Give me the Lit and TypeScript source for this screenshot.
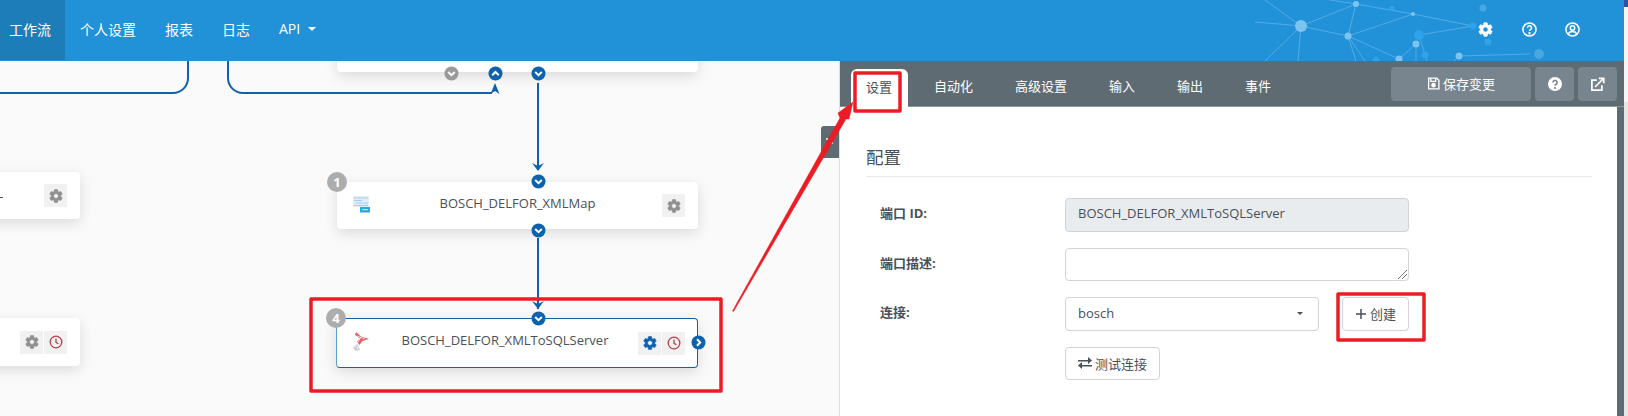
import { LitElement, html, css, svg } from "lit";
import { customElement } from "lit/decorators.js";

const gearPath = "M19.14 12.94c.04-.3.06-.61.06-.94 0-.32-.02-.64-.07-.94l2.03-1.58c.18-.14.23-.41.12-.61l-1.92-3.32c-.12-.22-.37-.29-.59-.22l-2.39.96c-.5-.38-1.03-.7-1.62-.94l-.36-2.54c-.04-.24-.24-.41-.48-.41h-3.84c-.24 0-.43.17-.47.41l-.36 2.54c-.59.24-1.13.57-1.62.94l-2.39-.96c-.22-.08-.47 0-.59.22L2.74 8.87c-.12.21-.08.47.12.61l2.03 1.58c-.05.3-.09.63-.09.94s.02.64.07.94l-2.03 1.58c-.18.14-.23.41-.12.61l1.92 3.32c.12.22.37.29.59.22l2.39-.96c.5.38 1.03.7 1.62.94l.36 2.54c.05.24.24.41.48.41h3.84c.24 0 .44-.17.47-.41l.36-2.54c.59-.24 1.13-.56 1.62-.94l2.39.96c.22.08.47 0 .59-.22l1.92-3.32c.12-.22.07-.47-.12-.61l-2.01-1.58zM12 15.6c-1.98 0-3.6-1.62-3.6-3.6s1.62-3.6 3.6-3.6 3.6 1.62 3.6 3.6-1.62 3.6-3.6 3.6z";

function gear(color: string, size = 16) {
  return html`<svg width=${size} height=${size} viewBox="0 0 24 24"><path fill=${color} stroke=${color} stroke-width="1" fill-rule="evenodd" d=${gearPath}></path></svg>`;
}
function clock() {
  return html`<svg width="14" height="14" viewBox="0 0 24 24" fill="none" stroke="#b5404a" stroke-width="2.2"><circle cx="12" cy="12" r="10"></circle><path d="M12 6v6.5l4 2.5"></path></svg>`;
}
function chevDot(dir: "up" | "down" | "right", color = "#0d62ad") {
  const d = dir === "up" ? "M4.2 9.2 7.500 6l3.300 3.200" : dir === "down" ? "M4.200 6 7.500 9.200 10.800 6" : "M6 4.200 9.200 7.500 6 10.800";
  return html`<svg width="15" height="15" viewBox="0 0 15 15"><circle cx="7.500" cy="7.500" r="7" fill=${color}></circle><path d=${d} fill="none" stroke="#fff" stroke-width="2"></path></svg>`;
}

@customElement("flow-node")
class FlowNode extends LitElement {
  static properties = {
    label: {},
    badge: {},
    selected: { type: Boolean },
    clock: { type: Boolean },
    x: { type: Number },
    y: { type: Number },
    w: { type: Number },
    h: { type: Number },
    kind: {},
  };
  label = "";
  badge = "";
  selected = false;
  clock = false;
  x = 0;
  y = 0;
  w = 361;
  h = 47;
  kind = "";
  static styles = css`
    :host { display: block; position: absolute; }
    .node {
      box-sizing: border-box; width: 100%; height: 100%; background: #fff; border-radius: 4px;
      box-shadow: 0 4px 14px rgba(0, 0, 0, 0.13); display: flex; align-items: center;
      padding: 0 12px 0 15px; border: 1px solid transparent;
    }
    .node.selected { border-color: #0d62ad; border-left-color: #5f9fd6; }
    .icon { width: 24px; height: 24px; flex: none; display: flex; align-items: center; margin-top: -3px; }
    .label { flex: 1; text-align: center; font-size: 13px; color: #495057; white-space: nowrap; margin-top: -6px; padding-right: 4px; }
    .btns { display: flex; gap: 1px; }
    .btn { width: 23px; height: 23px; background: #f1f1f1; display: flex; align-items: center; justify-content: center; }
    .badge {
      position: absolute; left: -10px; top: -10px; width: 20px; height: 20px; border-radius: 50%;
      background: #adadad; color: #fff; font-weight: 700; font-size: 13px; line-height: 20px; text-align: center;
    }
  `;
  render() {
    const gearColor = this.selected ? "#0d62ad" : "#8f8f8f";
    this.style.cssText = `left:${this.x}px;top:${this.y}px;width:${this.w}px;height:${this.h}px`;
    return html`<div class="node ${this.selected ? "selected" : ""}">
        <div class="icon">
          ${this.kind === "xml"
            ? html`<svg width="18" height="17" viewBox="0 0 18 17"><rect x="0" y="0" width="16" height="11" fill="#e3edf4"></rect><path d="M1 2h14M1 4.500h8M3 7h12M1 9.500h14" stroke="#a9cde6" stroke-width="1.200"></path><rect x="7" y="11" width="10" height="5.500" fill="#2ea8e0"></rect><path d="M9 13.700h6" stroke="#cfeaf8" stroke-width="1"></path></svg>`
            : this.kind === "sql"
            ? html`<svg width="18" height="19" viewBox="0 0 18 19"><path d="M4 0 9 4.500 17 7 10.500 9 7.500 13 5 9.500 8 6.500 3 3z" fill="#e2474f" fill-opacity=".85"></path><path d="M5 4l8 3M9 5 6 10" stroke="#fff" stroke-width=".7"></path><path d="M1 16 5.500 11.500 8 18 4 19z" fill="#cbcbcb"></path><path d="M3 15l4 1M5 12.500l1 5" stroke="#fff" stroke-width=".5"></path></svg>`
            : ""}
        </div>
        <div class="label">${this.label}</div>
        <div class="btns">
          <div class="btn">${gear(gearColor)}</div>
          ${this.clock ? html`<div class="btn">${clock()}</div>` : ""}
        </div>
      </div>
      ${this.badge ? html`<div class="badge">${this.badge}</div>` : ""}`;
  }
}

@customElement("app-root")
export class AppRoot extends LitElement {
  static styles = css`
    :host {
      display: flex; width: 1628px; height: 416px; overflow: hidden; position: relative;
      font-family: "Open Sans", "Noto Sans CJK SC", sans-serif; background: #fafafa;
    }
    .shell { width: 1624px; flex: none; display: flex; flex-direction: column; }
    .strip { width: 4px; flex: none; display: flex; flex-direction: column; background: #e6e6e6; }
    .strip .a { height: 7px; background: #2b50a8; }
    .strip .b { height: 95px; background: #f5f5f5; }
    header {
      height: 61px; flex: none; background: #2292d8; display: flex; align-items: stretch; position: relative; color: #fff; font-size: 14px;
    }
    .nav { height: 60px; padding: 0 14.5px 3px; box-sizing: border-box; display: flex; align-items: center; position: relative; }
    .nav.active { background: #1d7db8; padding: 0 14px 3px 9px; width: 65px; }
    .nav.second { padding-left: 15px; }
    .caret { width: 0; height: 0; border: 4px solid transparent; border-top-color: #fff; border-bottom: 0; margin-left: 8px; }
    .net { position: absolute; left: 1230px; top: 0; }
    .hicons { position: absolute; right: 44px; top: 0; height: 58px; display: flex; align-items: center; gap: 28px; }
    .hicons svg { display: block; }

    main { display: flex; height: 355px; }
    .canvas { width: 839px; flex: none; position: relative; overflow: hidden; background: #fafafa; border-right: 1px solid #dedede; }
    .wires { position: absolute; left: 0; top: 0; }
    .dot { position: absolute; width: 15px; height: 15px; }
    .dot svg { display: block; }
    .dash { position: absolute; left: 0; top: 136px; width: 3px; height: 1px; background: #495057; }
    .handle { position: absolute; left: 821px; top: 65px; width: 18px; height: 32px; background: #5f6b73; border-radius: 3px 0 0 3px; }
    .handle svg { display: block; }

    .panel { width: 784px; flex: none; display: flex; flex-direction: column; background: #5f6b73; }
    .tabbar { height: 46px; background: #5f6b73; display: flex; align-items: flex-end; flex: none; padding-left: 11px; position: relative; border-bottom: 1px solid #8b959c; box-sizing: border-box; }
    .tabs { display: flex; gap: 10px; height: 37px; font-size: 13px; color: #fff; }
    .tab { padding: 0 16px; display: flex; align-items: center; padding-bottom: 4px; box-sizing: border-box; }
    .tab.active { background: #fff; color: #495057; border-radius: 6px 6px 0 0; padding-left: 15px; margin-bottom: -1px; height: 38px; }
    .actions { position: absolute; right: 7px; top: 6px; display: flex; gap: 4px; }
    .act { height: 34px; width: 39px; background: #79858e; border-radius: 4px; display: flex; align-items: center; justify-content: center; color: #fff; font-size: 13px; gap: 3px; }
    .act.save { width: 140px; padding-bottom: 2px; box-sizing: border-box; }

    .content { width: 777px; flex: 1; background: #fff; box-sizing: border-box; padding: 0 25px 0 26px; }
    h2 { margin: 0; padding-top: 38px; height: 70px; box-sizing: border-box; font-size: 17.5px; font-weight: 400; color: #495057; line-height: 24px; border-bottom: 1px solid #e9e9e9; }
    .row { display: flex; align-items: flex-start; color: #495057; font-size: 13px; margin-top: 16px; }
    .row:first-of-type { margin-top: 21px; }
    .lbl { width: 199px; padding-left: 14px; box-sizing: border-box; font-weight: 700; line-height: 31px; }
    .input { width: 344px; height: 34px; box-sizing: border-box; border: 1px solid #ced4da; border-radius: 4px; padding: 0 12px; line-height: 29px; background: #fff; }
    .input.dis { background: #e9ecef; }
    .input.area { height: 33px; position: relative; }
    .grip { position: absolute; right: 1px; bottom: 1px; }
    .select { width: 254px; display: flex; align-items: center; justify-content: space-between; padding-right: 15px; padding-bottom: 2px; }
    .sel-caret { width: 0; height: 0; border: 3.5px solid transparent; border-top-color: #495057; border-bottom: 0; }
    .btn { height: 34px; box-sizing: border-box; border: 1px solid #ced4da; border-radius: 4px; background: #fff; display: flex; align-items: center; justify-content: center; gap: 3px; padding-bottom: 1px; }
    .create { width: 67px; margin-left: 23px; }
    .test { width: 95px; height: 33px; }
    .annot { position: absolute; left: 0; top: 0; pointer-events: none; }
  `;
  render() {
    const dots: [number, number, "up" | "down" | "right", string?][] = [
      [451, 12, "down", "#9a9a9a"],
      [495, 12, "up"],
      [538, 12, "down"],
      [538, 120, "down"],
      [538, 169, "down"],
      [538, 257, "down"],
      [698, 281, "right"],
    ];
    const lightNodes: [number, number, number][] = [
      [71, 26, 6], [126, 4, 3], [183, 14, 2], [118, 36, 3.5], [186, 44, 3.5], [169, 59, 3.5], [229, 56, 3.5],
    ];
    const darkNodes: [number, number, number][] = [
      [162, 8, 2.5], [189, 35, 5], [243, 26, 3.5], [195, 55, 3.5], [146, 60, 3.5], [258, 42, 3.5],
    ];
    const fadedNodes: [number, number, number][] = [
      [253, 8, 3.5], [309, 54, 5],
    ];
    const links: [number, number, number, number][] = [
      [71, 26, 126, 4], [71, 26, 118, 36], [126, 4, 183, 14], [126, 4, 118, 36], [118, 36, 183, 14], [118, 36, 169, 59], [118, 36, 135, 61], [118, 36, 126, 61],
      [71, 26, 35, 61], [71, 26, 68, 61], [71, 26, 25, 22], [71, 26, 35, 0], [183, 14, 243, 26], [189, 35, 243, 26], [186, 44, 186, 61], [186, 44, 169, 59],
      [189, 35, 197, 61], [229, 56, 300, 54], [229, 56, 224, 61], [126, 4, 100, 0],
    ];
    return html`
      <div class="shell">
        <header>
          <div class="nav active">工作流</div>
          <div class="nav second">个人设置</div>
          <div class="nav">报表</div>
          <div class="nav">日志</div>
          <div class="nav">API<span class="caret"></span></div>
          <svg class="net" width="394" height="61" viewBox="0 0 394 61">
            ${links.map(([a, b, c, d]) => svg`<line x1=${a} y1=${b} x2=${c} y2=${d} stroke="#7cc0ec" stroke-opacity=".55" stroke-width="1"></line>`)}
            ${lightNodes.map(([x, y, r]) => svg`<circle cx=${x} cy=${y} r=${r} fill="#7cc4f0"></circle>`)}
            ${darkNodes.map(([x, y, r]) => svg`<circle cx=${x} cy=${y} r=${r} fill="#2ea2ea"></circle>`)}
            ${fadedNodes.map(([x, y, r]) => svg`<circle cx=${x} cy=${y} r=${r} fill="#4aa6df"></circle>`)}
          </svg>
          <div class="hicons">
            <span>${gear("#fff", 17)}</span>
            <svg width="15" height="15" viewBox="0 0 24 24" fill="none" stroke="#fff" stroke-width="2.400"><circle cx="12" cy="12" r="10.500"></circle><path d="M8.800 9.200a3.200 3.200 0 1 1 4.600 3c-1 .6-1.400 1.100-1.400 2.300"></path><circle cx="12" cy="18" r=".8" fill="#fff"></circle></svg>
            <svg width="15" height="15" viewBox="0 0 24 24" fill="none" stroke="#fff" stroke-width="2.400"><circle cx="12" cy="12" r="10.500"></circle><circle cx="12" cy="9.500" r="3.500"></circle><path d="M5.500 19c1-3 3.500-4 6.500-4s5.500 1 6.500 4"></path></svg>
          </div>
        </header>
        <main>
          <div class="canvas">
            <svg class="wires" width="839" height="355" viewBox="0 61 839 355" fill="none" stroke="#0d62ad" stroke-width="2">
              <path d="M188 61v17a15 15 0 0 1-15 15H0"></path>
              <path d="M228 61v17a15 15 0 0 0 15 15h249"></path>
              <path d="M538 83v87M538 238v71"></path>
              <path d="M495 82l-4.500 11 4.500-3 4.500 3z" fill="#0d62ad" stroke="none" transform="translate(0 1)"></path>
              <path d="M532 163l6 8 6-8-6 3zM532 301l6 8 6-8-6 3z" fill="#0d62ad" stroke="none"></path>
            </svg>
            <flow-node .x=${-281} .y=${-61}></flow-node>
            <flow-node .x=${337} .y=${-61} .h=${72}></flow-node>
            <flow-node .x=${-281} .y=${111} .h=${47}></flow-node>
            <flow-node .x=${-281} .y=${257} .h=${48} .clock=${true}></flow-node>
            <flow-node .x=${337} .y=${121} .label=${"BOSCH_DELFOR_XMLMap"} .badge=${"1"} .kind=${"xml"}></flow-node>
            <flow-node .x=${336} .y=${257} .w=${362} .h=${50} .selected=${true} .clock=${true} .label=${"BOSCH_DELFOR_XMLToSQLServer"} .badge=${"4"} .kind=${"sql"}></flow-node>
            <div class="dash"></div>
            ${dots.map(([x, y, d, c]) => html`<div class="dot" style="left:${x - 7.5}px;top:${y - 7.5}px">${chevDot(d, c)}</div>`)}
            <div class="handle"><svg width="18" height="32" viewBox="0 0 18 32" fill="#fff"><circle cx="6" cy="13" r="1"></circle><circle cx="11" cy="17" r="1"></circle></svg></div>
          </div>
          <div class="panel">
            <div class="tabbar">
              <div class="tabs">
                <div class="tab active">设置</div>
                <div class="tab">自动化</div>
                <div class="tab">高级设置</div>
                <div class="tab">输入</div>
                <div class="tab">输出</div>
                <div class="tab">事件</div>
              </div>
              <div class="actions">
                <div class="act save">
                  <svg width="13" height="13" viewBox="0 0 24 24" fill="none" stroke="#fff" stroke-width="2.400"><path d="M3 2h15l4 4v16H3z"></path><path d="M7 2v6h9V2"></path><circle cx="12" cy="15" r="3" fill="#fff"></circle></svg>
                  保存变更
                </div>
                <div class="act"><svg width="14" height="14" viewBox="0 0 24 24"><circle cx="12" cy="12" r="12" fill="#fff"></circle><path d="M8.500 9.500a3.500 3.500 0 1 1 5 3.200c-1 .5-1.500 1-1.500 2.300" fill="none" stroke="#79858e" stroke-width="2.800"></path><circle cx="12" cy="18.800" r="1.700" fill="#79858e"></circle></svg></div>
                <div class="act"><svg width="15" height="15" viewBox="0 0 24 24" fill="none" stroke="#fff" stroke-width="2.800"><path d="M11 5H3v16h16v-8"></path><path d="M8 16 22 2M14 2h8v8"></path></svg></div>
              </div>
            </div>
            <div class="content">
              <h2>配置</h2>
              <div class="row"><div class="lbl">端口 ID:</div><div class="input dis">BOSCH_DELFOR_XMLToSQLServer</div></div>
              <div class="row"><div class="lbl">端口描述:</div><div class="input area"><svg class="grip" width="10" height="10" viewBox="0 0 10 10" stroke="#777" stroke-width="1"><path d="M1 10 10 1M5 10l5-5"></path></svg></div></div>
              <div class="row">
                <div class="lbl">连接:</div>
                <div class="input select">bosch<span class="sel-caret"></span></div>
                <div class="btn create"><svg width="12" height="12" viewBox="0 0 12 12" stroke="#495057" stroke-width="1.500"><path d="M6 1v10M1 6h10"></path></svg>创建</div>
              </div>
              <div class="row"><div class="lbl"></div><div class="btn test"><svg width="14" height="12" viewBox="0 0 14 12" fill="#495057"><path d="M0 3h10V0l4 3.500-4 3.500V4.500H0zM14 8H4V5l-4 3.500L4 12V9.500h10z"></path></svg>测试连接</div></div>
            </div>
          </div>
        </main>
      </div>
      <div class="strip"><div class="a"></div><div class="b"></div></div>
      <svg class="annot" width="1628" height="416" viewBox="0 0 1628 416" fill="none" stroke="#ed1c24" stroke-width="3.500" stroke-linejoin="round">
        <rect x="311" y="299" width="410" height="92"></rect>
        <rect x="855" y="73" width="45" height="38"></rect>
        <rect x="1338" y="294" width="86" height="46"></rect>
        <path d="M732.500 311 840 118 838 113 853 102 849 119 846 119 733.500 311.500z" fill="#ed1c24" stroke="#ed1c24" stroke-width=".5"></path>
      </svg>
    `;
  }
}
void FlowNode;
